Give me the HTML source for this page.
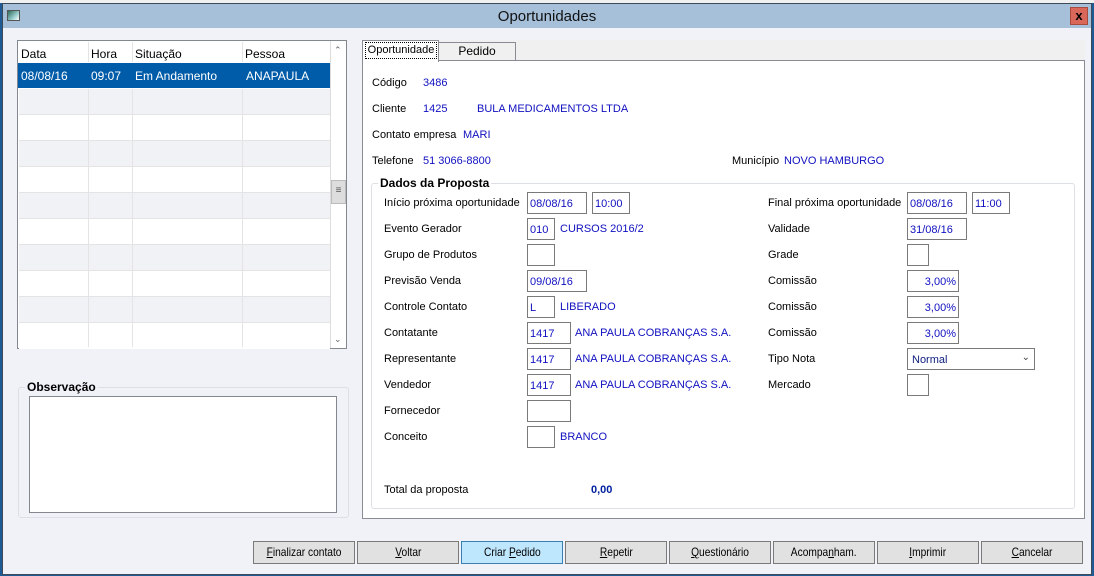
<!DOCTYPE html>
<html><head><meta charset="utf-8"><style>
*{box-sizing:border-box;margin:0;padding:0}
body{width:1094px;height:576px;overflow:hidden;background:#1e5a94;font-family:"Liberation Sans",sans-serif;font-size:11px;color:#000;position:relative}
.a{position:absolute}
.in{position:absolute;height:22px;border:1px solid #7a7a7a;background:#fff;color:#1010c0;padding:4px 2px 2px;white-space:nowrap;line-height:14px}
.l{position:absolute;white-space:nowrap;margin-top:1px}
.b{position:absolute;color:#1010c0;white-space:nowrap;margin-top:1px}
.btn{position:absolute;top:541px;height:23px;width:102px;border:1px solid #7a7a7a;background:#e1e1e1;text-align:center;line-height:21px;font-size:12px;transform-origin:center}
.btn span{display:inline-block;transform:scaleX(.85)}
.row{position:absolute;left:19px;width:311px;height:26px;border-bottom:1px solid #e4e4e4}
.vl{position:absolute;top:41px;width:1px;height:306px;background:#e4e4e4}
</style></head><body>
<div class="a" style="left:0;top:0;width:1094px;height:3px;background:#f0f0f0"></div>
<div class="a" style="left:2;top:3px;left:2px;width:1090px;height:572px;background:#f0f2f8;border:1px solid #3c4a5a"></div>
<div class="a" style="left:3px;top:4px;width:1088px;height:24px;background:#a6c0da"></div>
<div class="a" style="left:7px;top:10px;width:13px;height:11px;border:1px solid #555;background:linear-gradient(135deg,#2d6a5a,#9cc 60%,#fff)"></div>
<div class="l" style="left:0;width:1094px;top:7px;text-align:center;font-size:15px;color:#111">Oportunidades</div>
<div class="a" style="left:1070px;top:7px;width:18px;height:18px;background:#d9675a;border:1px solid #a84a3e;color:#000;font-weight:bold;font-size:13px;text-align:center;line-height:15px">x</div>

<!-- grid -->
<div class="a" style="left:17px;top:40px;width:330px;height:309px;border:1px solid #828790;background:#fff"></div>
<div class="a" style="left:18px;top:41px;width:312px;height:22px;background:#fff"></div>
<div class="l" style="left:21px;top:46px;font-size:12px">Data</div>
<div class="l" style="left:91px;top:46px;font-size:12px">Hora</div>
<div class="l" style="left:135px;top:46px;font-size:12px">Situação</div>
<div class="l" style="left:245px;top:46px;font-size:12px">Pessoa</div>
<div class="a" style="left:18px;top:63px;width:312px;height:25px;background:#005ca8"></div>
<div class="l" style="left:21px;top:68px;color:#fff;font-size:12px">08/08/16</div>
<div class="l" style="left:91px;top:68px;color:#fff;font-size:12px">09:07</div>
<div class="l" style="left:135px;top:68px;color:#fff;font-size:12px">Em Andamento</div>
<div class="l" style="left:246px;top:68px;color:#fff;font-size:12px">ANAPAULA</div>
<div class="row" style="top:89px;background:#f0f2f5"></div>
<div class="row" style="top:115px;background:#fff"></div>
<div class="row" style="top:141px;background:#f0f2f5"></div>
<div class="row" style="top:167px;background:#fff"></div>
<div class="row" style="top:193px;background:#f0f2f5"></div>
<div class="row" style="top:219px;background:#fff"></div>
<div class="row" style="top:245px;background:#f0f2f5"></div>
<div class="row" style="top:271px;background:#fff"></div>
<div class="row" style="top:297px;background:#f0f2f5"></div>
<div class="row" style="top:323px;background:#fff;border:0"></div>
<div class="vl" style="left:88px;top:89px;height:258px"></div><div class="vl" style="left:132px;top:89px;height:258px"></div><div class="vl" style="left:242px;top:89px;height:258px"></div>
<div class="a" style="left:88px;top:42px;width:1px;height:20px;background:#e4e4e4"></div><div class="a" style="left:132px;top:42px;width:1px;height:20px;background:#e4e4e4"></div><div class="a" style="left:242px;top:42px;width:1px;height:20px;background:#e4e4e4"></div>
<div class="a" style="left:330px;top:41px;width:16px;height:307px;background:#fff;border-left:1px solid #ddd"></div>
<div class="l" style="left:334px;top:44px;color:#666;font-size:9px">&#8963;</div>
<div class="a" style="left:331px;top:180px;width:15px;height:24px;background:#ddd;border:1px solid #bbb;text-align:center;line-height:20px;font-size:10px;color:#555">&#8801;</div>
<div class="l" style="left:334px;top:333px;color:#666;font-size:9px">&#8964;</div>

<!-- observacao -->
<div class="a" style="left:18px;top:387px;width:331px;height:131px;border:1px solid #dcdfe6;border-radius:3px"></div>
<div class="l" style="left:25px;top:379px;background:#f0f2f8;font-weight:bold;font-size:12px;padding:0 2px">Observação</div>
<div class="a" style="left:29px;top:396px;width:308px;height:117px;background:#fff;border:1px solid #828790"></div>

<!-- tabs -->
<div class="a" style="left:362px;top:40px;width:723px;height:20px;background:#f0f0f0"></div>
<div class="a" style="left:362px;top:60px;width:723px;height:459px;background:#fff;border:1px solid #898c95"></div>
<div class="a" style="left:438px;top:42px;width:78px;height:19px;background:#f0f0f0;border:1px solid #898c95;text-align:center;line-height:17px;font-size:12px">Pedido</div>
<div class="a" style="left:362px;top:40px;width:77px;height:22px;background:#fff;border:1px solid #898c95;border-bottom:0"></div>
<div class="a" style="left:365px;top:42px;width:72px;height:17px;border:1px dotted #000;text-align:center;line-height:15px;font-size:11px">Oportunidade</div>

<div class="l" style="left:372px;top:76px">Código</div><div class="b" style="left:423px;top:76px">3486</div>
<div class="l" style="left:372px;top:102px">Cliente</div><div class="b" style="left:423px;top:102px">1425</div><div class="b" style="left:477px;top:102px">BULA MEDICAMENTOS LTDA</div>
<div class="l" style="left:372px;top:128px">Contato empresa</div><div class="b" style="left:463px;top:128px">MARI</div>
<div class="l" style="left:372px;top:154px">Telefone</div><div class="b" style="left:423px;top:154px">51 3066-8800</div>
<div class="l" style="left:732px;top:154px">Município</div><div class="b" style="left:784px;top:154px">NOVO HAMBURGO</div>

<div class="a" style="left:371px;top:183px;width:704px;height:326px;border:1px solid #dcdfe6;border-radius:3px"></div>
<div class="l" style="left:378px;top:175px;background:#fff;font-weight:bold;font-size:12px;padding:0 2px">Dados da Proposta</div>

<div class="l" style="left:384px;top:196px">Início próxima oportunidade</div>
<div class="in" style="left:527px;top:192px;width:60px">08/08/16</div><div class="in" style="left:592px;top:192px;width:38px">10:00</div>
<div class="l" style="left:384px;top:222px">Evento Gerador</div>
<div class="in" style="left:527px;top:218px;width:28px">010</div><div class="b" style="left:560px;top:222px">CURSOS 2016/2</div>
<div class="l" style="left:384px;top:248px">Grupo de Produtos</div>
<div class="in" style="left:527px;top:244px;width:28px"></div>
<div class="l" style="left:384px;top:274px">Previsão Venda</div>
<div class="in" style="left:527px;top:270px;width:60px">09/08/16</div>
<div class="l" style="left:384px;top:300px">Controle Contato</div>
<div class="in" style="left:527px;top:296px;width:28px">L</div><div class="b" style="left:560px;top:300px">LIBERADO</div>
<div class="l" style="left:384px;top:326px">Contatante</div>
<div class="in" style="left:527px;top:322px;width:44px">1417</div><div class="b" style="left:575px;top:326px">ANA PAULA COBRANÇAS S.A.</div>
<div class="l" style="left:384px;top:352px">Representante</div>
<div class="in" style="left:527px;top:348px;width:44px">1417</div><div class="b" style="left:575px;top:352px">ANA PAULA COBRANÇAS S.A.</div>
<div class="l" style="left:384px;top:378px">Vendedor</div>
<div class="in" style="left:527px;top:374px;width:44px">1417</div><div class="b" style="left:575px;top:378px">ANA PAULA COBRANÇAS S.A.</div>
<div class="l" style="left:384px;top:404px">Fornecedor</div>
<div class="in" style="left:527px;top:400px;width:44px"></div>
<div class="l" style="left:384px;top:430px">Conceito</div>
<div class="in" style="left:527px;top:426px;width:28px"></div><div class="b" style="left:560px;top:430px">BRANCO</div>
<div class="l" style="left:384px;top:483px">Total da proposta</div>
<div class="b" style="left:591px;top:483px;font-weight:bold;color:#0020a0">0,00</div>

<div class="l" style="left:768px;top:196px">Final próxima oportunidade</div>
<div class="in" style="left:907px;top:192px;width:60px">08/08/16</div><div class="in" style="left:972px;top:192px;width:38px">11:00</div>
<div class="l" style="left:768px;top:222px">Validade</div>
<div class="in" style="left:907px;top:218px;width:60px">31/08/16</div>
<div class="l" style="left:768px;top:248px">Grade</div>
<div class="in" style="left:907px;top:244px;width:22px"></div>
<div class="l" style="left:768px;top:274px">Comissão</div>
<div class="in" style="left:907px;top:270px;width:52px;text-align:right">3,00%</div>
<div class="l" style="left:768px;top:300px">Comissão</div>
<div class="in" style="left:907px;top:296px;width:52px;text-align:right">3,00%</div>
<div class="l" style="left:768px;top:326px">Comissão</div>
<div class="in" style="left:907px;top:322px;width:52px;text-align:right">3,00%</div>
<div class="l" style="left:768px;top:352px">Tipo Nota</div>
<div class="in" style="left:907px;top:348px;width:128px;color:#102080;padding-left:4px">Normal<span style="position:absolute;right:4px;top:2px;color:#444;font-size:10px">&#8964;</span></div>
<div class="l" style="left:768px;top:378px">Mercado</div>
<div class="in" style="left:907px;top:374px;width:22px"></div>

<div class="btn" style="left:253px"><span><u>F</u>inalizar contato</span></div>
<div class="btn" style="left:357px"><span><u>V</u>oltar</span></div>
<div class="btn" style="left:461px;background:#bee6fd;border-color:#3c7fb1"><span>Criar <u>P</u>edido</span></div>
<div class="btn" style="left:565px"><span><u>R</u>epetir</span></div>
<div class="btn" style="left:669px"><span><u>Q</u>uestionário</span></div>
<div class="btn" style="left:773px"><span>Acompa<u>n</u>ham.</span></div>
<div class="btn" style="left:877px"><span><u>I</u>mprimir</span></div>
<div class="btn" style="left:981px"><span><u>C</u>ancelar</span></div>
</body></html>
